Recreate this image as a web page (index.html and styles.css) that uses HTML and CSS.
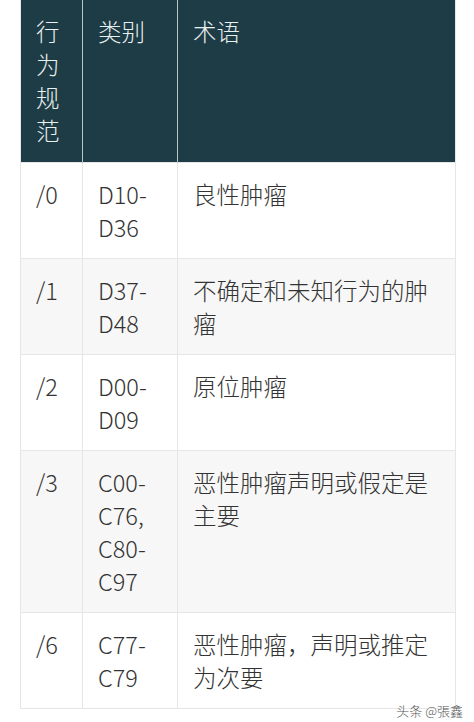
FILE: index.html
```html
<!DOCTYPE html>
<html lang="zh">
<head>
<meta charset="utf-8">
<link rel="stylesheet" href="styles.css">
</head>
<body>
<div class="page">
  <table class="grid">
    <colgroup>
      <col class="c1"><col class="c2"><col class="c3">
    </colgroup>
    <thead>
      <tr><th>行为规范</th><th>类别</th><th>术语</th></tr>
    </thead>
    <tbody>
      <tr><td>/0</td><td>D10-D36</td><td>良性肿瘤</td></tr>
      <tr class="alt"><td>/1</td><td>D37-D48</td><td>不确定和未知行为的肿瘤</td></tr>
      <tr><td>/2</td><td>D00-D09</td><td>原位肿瘤</td></tr>
      <tr class="alt"><td>/3</td><td>C00-C76, C80-C97</td><td>恶性肿瘤声明或假定是主要</td></tr>
      <tr><td>/6</td><td>C77-C79</td><td>恶性肿瘤，声明或推定为次要</td></tr>
    </tbody>
  </table>
  <div class="mark">头条 @張鑫</div>
</div>
</body>
</html>
```

FILE: styles.css
```css
html, body {
  margin: 0;
  padding: 0;
  background: #ffffff;
}
.page {
  position: relative;
  width: 474px;
  height: 722px;
  padding-left: 20px;
  box-sizing: border-box;
  font-family: "Noto Sans CJK SC", "Noto Sans", sans-serif;
}
.grid {
  border-collapse: collapse;
  width: 435px;
  table-layout: fixed;
  font-size: 23.5px;
  line-height: 33px;
  font-weight: 300;
}
.c1 { width: 62px; }
.c2 { width: 95px; }
.c3 { width: 278px; }
.grid th,
.grid td {
  text-align: left;
  vertical-align: top;
  padding: 15px 14px 14px 15px;
  font-weight: 300;
  word-break: normal;
}
.grid th {
  padding-top: 15px;
  padding-bottom: 15px;
  background: #1e3c45;
  color: #e9f0f0;
  border-left: 1px solid #b9c6c8;
  border-right: 1px solid #b9c6c8;
}
.grid th:first-child { border-left-color: #e4e8e8; }
.grid th:last-child { border-right-color: #e4e8e8; }
.grid td {
  color: #333333;
  border: 1px solid #e6e6e6;
}
.grid tr.alt td {
  background: #f7f7f7;
}
.mark {
  position: absolute;
  right: 11px;
  top: 702px;
  font-size: 13px;
  line-height: 17px;
  font-weight: 300;
  color: #555555;
  text-shadow: 0 0 2px #ffffff, 0 0 1px #ffffff;
}
```
